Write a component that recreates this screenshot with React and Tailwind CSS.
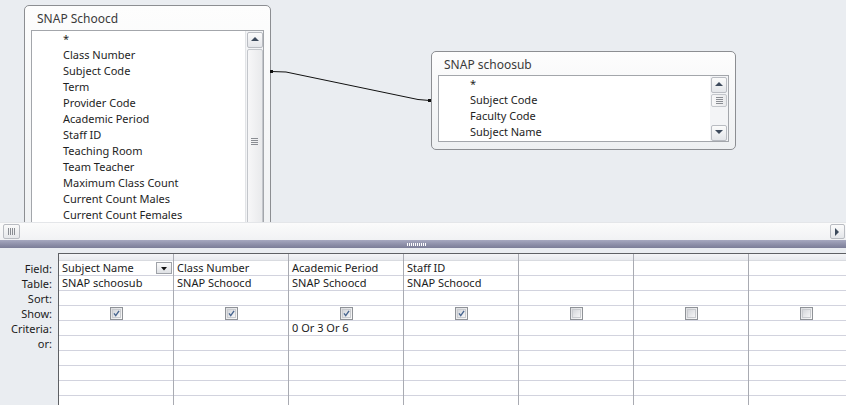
import React from 'react';

const font = { fontFamily: '"Noto Sans", "Open Sans", sans-serif' };

const table1Fields = [
  '*',
  'Class Number',
  'Subject Code',
  'Term',
  'Provider Code',
  'Academic Period',
  'Staff ID',
  'Teaching Room',
  'Team Teacher',
  'Maximum Class Count',
  'Current Count Males',
  'Current Count Females',
];

const table2Fields = ['*', 'Subject Code', 'Faculty Code', 'Subject Name'];

const columns = [
  { field: 'Subject Name', table: 'SNAP schoosub', show: true, criteria: '', dropdown: true },
  { field: 'Class Number', table: 'SNAP Schoocd', show: true, criteria: '' },
  { field: 'Academic Period', table: 'SNAP Schoocd', show: true, criteria: '0 Or 3 Or 6' },
  { field: 'Staff ID', table: 'SNAP Schoocd', show: true, criteria: '' },
  { field: '', table: '', show: false, criteria: '' },
  { field: '', table: '', show: false, criteria: '' },
  { field: '', table: '', show: false, criteria: '' },
];

const labels = ['Field:', 'Table:', 'Sort:', 'Show:', 'Criteria:', 'or:', '', '', '', ''];

function Arrow({ dir }) {
  const pts = dir === 'up' ? '1,6 5,2 9,6' : dir === 'down' ? '1,2 5,6 9,2' : '2,1 6,5 2,9';
  return (
    <svg width="10" height="10" viewBox="0 0 10 10" className="block">
      <polygon points={pts} fill="#3d4a5c" />
    </svg>
  );
}

function ScrollButton({ dir }) {
  return (
    <div className="h-[16px] w-[16px] flex items-center justify-center rounded-[2px] border border-[#b9bcc2] bg-gradient-to-b from-[#fbfbfb] to-[#e4e6ea]">
      <Arrow dir={dir} />
    </div>
  );
}

function Grip({ vertical }) {
  return (
    <div className={vertical ? 'flex flex-col gap-[1px]' : 'flex gap-[1px]'}>
      {[0, 1, 2, 3].map((i) => (
        <div key={i} className={vertical ? 'h-[1px] w-[7px] bg-[#8a8d93]' : 'w-[1px] h-[7px] bg-[#8a8d93]'} />
      ))}
    </div>
  );
}

function FieldList({ items, height, scroll }) {
  return (
    <div className="flex border border-[#a3a6ab] bg-white" style={{ height }}>
      <div className="flex-1 overflow-hidden">
        {items.map((f) => (
          <div key={f} className="h-[16px] leading-[16px] pl-[31px] text-[11px] text-[#1e1e1e] whitespace-nowrap">
            {f}
          </div>
        ))}
      </div>
      {scroll}
    </div>
  );
}

function CheckBox({ checked }) {
  return (
    <div className="h-[13px] w-[13px] border border-[#8f9297] bg-gradient-to-br from-[#dcdde0] to-[#fafafa] flex items-center justify-center p-[1px]">
      <div className="h-full w-full border border-[#c9cbcf] bg-gradient-to-br from-[#d5d7db] to-[#f6f6f7] flex items-center justify-center">
        {checked && (
          <svg width="9" height="9" viewBox="0 0 9 9" className="block">
            <path d="M1.3 4.3 L3.5 7.2 L7.8 1.2" stroke="#47658f" strokeWidth="1.8" fill="none" />
          </svg>
        )}
      </div>
    </div>
  );
}

export default function App() {
  return (
    <div className="w-[846px] h-[405px] overflow-hidden flex flex-col bg-[#eaedf1]" style={font}>
      {/* Diagram canvas */}
      <div className="relative h-[222px] shrink-0 overflow-hidden bg-[#eaedf1]">
        {/* SNAP Schoocd */}
        <div className="absolute left-[24px] top-[5px] w-[247px] h-[260px] rounded-[5px] border border-[#8c8e92] bg-gradient-to-b from-[#fdfdfd] to-[#eef0f2] px-[6px]">
          <div className="h-[24px] pt-[6px] pl-[6px] text-[12px] leading-[14px] text-[#3a3a3a]">SNAP Schoocd</div>
          <FieldList
            items={table1Fields}
            height={230}
            scroll={
              <div className="w-[18px] border-l border-[#e2e4e7] bg-[#f3f4f6] flex flex-col items-center pt-[1px]">
                <ScrollButton dir="up" />
                <div className="mt-[1px] w-[16px] flex-1 rounded-[2px] border border-[#c3c6cb] bg-gradient-to-r from-[#f7f7f8] to-[#e9eaec] flex justify-center pt-[88px]">
                  <Grip vertical />
                </div>
              </div>
            }
          />
        </div>

        {/* SNAP schoosub */}
        <div className="absolute left-[431px] top-[51px] w-[305px] h-[99px] rounded-[5px] border border-[#8c8e92] bg-gradient-to-b from-[#fdfdfd] to-[#eef0f2] px-[6px]">
          <div className="h-[23px] pt-[6px] pl-[6px] text-[12px] leading-[14px] text-[#3a3a3a]">SNAP schoosub</div>
          <FieldList
            items={table2Fields}
            height={67}
            scroll={
              <div className="w-[18px] bg-[#f3f4f6] flex flex-col items-center pt-[1px]">
                <ScrollButton dir="up" />
                <div className="mt-[1px] h-[13px] w-[16px] rounded-[2px] border border-[#c3c6cb] bg-gradient-to-r from-[#f7f7f8] to-[#e9eaec] flex items-center justify-center">
                  <Grip vertical />
                </div>
                <div className="flex-1" />
                <ScrollButton dir="down" />
              </div>
            }
          />
        </div>

        {/* Join line */}
        <svg className="absolute left-0 top-0" width="846" height="222">
          <polyline points="271,71.5 286,72 418,99.5 430,100.5" stroke="#111" strokeWidth="1" fill="none" />
          <rect x="270" y="70" width="3" height="3" fill="#111" />
          <rect x="428" y="99" width="3" height="3" fill="#111" />
        </svg>
      </div>

      {/* Horizontal scrollbar */}
      <div className="h-[18px] shrink-0 flex items-center bg-gradient-to-b from-[#fbfbfb] to-[#f1f2f4] border-t border-[#e4e6e9]">
        <div className="ml-[3px] h-[15px] w-[17px] rounded-[2px] border border-[#b9bcc2] bg-gradient-to-b from-[#fafafa] to-[#e6e8eb] flex items-center justify-center">
          <Grip />
        </div>
        <div className="flex-1" />
        <div className="mr-[1px] h-[15px] w-[15px] rounded-[2px] border border-[#b9bcc2] bg-gradient-to-b from-[#fbfbfb] to-[#e4e6ea] flex items-center justify-center">
          <Arrow dir="right" />
        </div>
      </div>

      {/* Splitter */}
      <div className="h-[8px] shrink-0 bg-gradient-to-b from-[#a7a9c0] via-[#9092ab] to-[#7c7e98] flex items-center justify-center">
        <div className="flex gap-[1px] ml-[-14px]">
          {Array.from({ length: 10 }).map((_, i) => (
            <div key={i} className="h-[3px] w-[1px] bg-white" />
          ))}
        </div>
      </div>

      {/* Design grid */}
      <div className="flex-1 flex pt-[5px] bg-[#eaedf1]">
        <div className="w-[58px] shrink-0 pt-[8px]">
          {labels.map((l, i) => (
            <div key={i} className="h-[15px] leading-[15px] pr-[6px] text-right text-[11px] text-[#1b1b1b]">
              {l}
            </div>
          ))}
        </div>
        <div className="flex-1 overflow-hidden border-l border-t border-[#5e6064] bg-white">
          <div className="flex w-[805px]">
            {columns.map((c, i) => (
              <div key={i} className="w-[115px] shrink-0 border-r border-[#a9abb2]">
                <div className="h-[7px] border-b border-[#d9dbe0] bg-gradient-to-b from-[#f4f5f7] to-[#e8eaee]" />
                <div className="relative h-[15px] border-b border-[#d2d3de] pl-[3px] text-[11px] leading-[14px] text-[#1b1b1b] whitespace-nowrap">
                  {c.field}
                  {c.dropdown && (
                    <div className="absolute right-[1px] top-[1px] h-[12px] w-[16px] border border-[#9fa2a8] bg-gradient-to-b from-[#fbfbfb] to-[#dfe1e5] flex items-center justify-center">
                      <svg width="8" height="5" viewBox="0 0 8 5" className="block">
                        <polygon points="1,1 7,1 4,4.5" fill="#111" />
                      </svg>
                    </div>
                  )}
                </div>
                <div className="h-[15px] border-b border-[#d2d3de] pl-[3px] text-[11px] leading-[14px] text-[#1b1b1b] whitespace-nowrap">
                  {c.table}
                </div>
                <div className="h-[15px] border-b border-[#d2d3de]" />
                <div className="h-[15px] border-b border-[#d2d3de] flex items-center justify-center">
                  <CheckBox checked={c.show} />
                </div>
                <div className="h-[15px] border-b border-[#d2d3de] pl-[3px] text-[11px] leading-[14px] text-[#1b1b1b] whitespace-nowrap">
                  {c.criteria}
                </div>
                {[0, 1, 2, 3, 4].map((r) => (
                  <div key={r} className="h-[15px] border-b border-[#d2d3de]" />
                ))}
              </div>
            ))}
          </div>
        </div>
      </div>
    </div>
  );
}
